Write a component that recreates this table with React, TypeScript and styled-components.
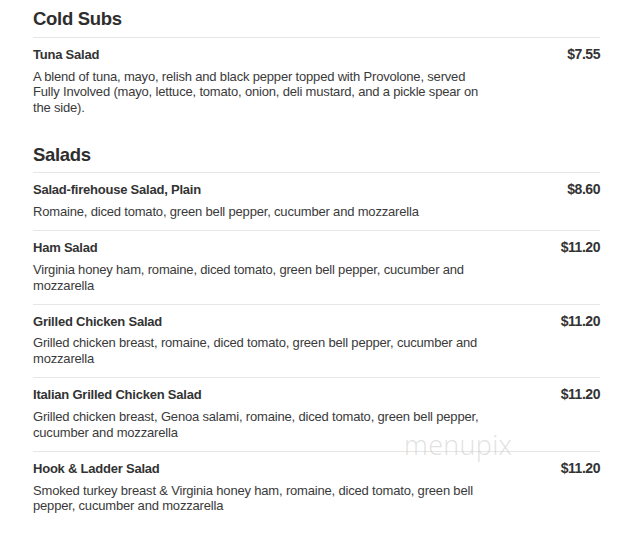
import React from 'react';
import styled, { createGlobalStyle } from 'styled-components';

const Global = createGlobalStyle`
  html, body { margin: 0; padding: 0; background: #ffffff; }
  body {
    font-family: "Liberation Sans", Arial, Helvetica, sans-serif;
    color: #333333;
  }
`;

const Page = styled.main`
  position: relative;
  width: 567px;
  padding: 8.4px 0 0 33px;
`;

const Section = styled.section`
  & + & { margin-top: 17.3px; }
`;

const Heading = styled.h2`
  margin: 0 0 7.6px;
  font-size: 18.5px;
  line-height: 21px;
  font-weight: 700;
  letter-spacing: -0.3px;
  color: #2e2e2e;
`;

const Item = styled.div`
  display: grid;
  grid-template-columns: 1fr auto;
  align-items: baseline;
  border-top: 1px solid #e6e6e6;
  padding: 9px 0 10.5px;
`;

const Name = styled.div`
  font-size: 13px;
  line-height: 15.7px;
  font-weight: 700;
  letter-spacing: -0.22px;
  color: #333333;
`;

const Price = styled.div`
  font-size: 14px;
  line-height: 15.7px;
  font-weight: 700;
  letter-spacing: -0.45px;
  text-align: right;
  color: #333333;
`;

const Desc = styled.p`
  grid-column: 1 / span 2;
  margin: 6px 0 0;
  max-width: 457px;
  font-size: 13px;
  line-height: 15.7px;
  letter-spacing: -0.18px;
  color: #3a3a3a;
`;

const Watermark = styled.span`
  position: absolute;
  left: 404px;
  top: 431px;
  font-family: "Open Sans", "Liberation Sans", sans-serif;
  font-weight: 300;
  font-size: 27px;
  line-height: 27px;
  letter-spacing: 0.3px;
  color: rgba(200, 200, 200, 0.55);
  pointer-events: none;
`;

type MenuItem = { name: string; price: string; desc: string };

const sections: { title: string; items: MenuItem[] }[] = [
  {
    title: 'Cold Subs',
    items: [
      {
        name: 'Tuna Salad',
        price: '$7.55',
        desc:
          'A blend of tuna, mayo, relish and black pepper topped with Provolone, served Fully Involved (mayo, lettuce, tomato, onion, deli mustard, and a pickle spear on the side).',
      },
    ],
  },
  {
    title: 'Salads',
    items: [
      {
        name: 'Salad-firehouse Salad, Plain',
        price: '$8.60',
        desc: 'Romaine, diced tomato, green bell pepper, cucumber and mozzarella',
      },
      {
        name: 'Ham Salad',
        price: '$11.20',
        desc: 'Virginia honey ham, romaine, diced tomato, green bell pepper, cucumber and mozzarella',
      },
      {
        name: 'Grilled Chicken Salad',
        price: '$11.20',
        desc: 'Grilled chicken breast, romaine, diced tomato, green bell pepper, cucumber and mozzarella',
      },
      {
        name: 'Italian Grilled Chicken Salad',
        price: '$11.20',
        desc: 'Grilled chicken breast, Genoa salami, romaine, diced tomato, green bell pepper, cucumber and mozzarella',
      },
      {
        name: 'Hook & Ladder Salad',
        price: '$11.20',
        desc: 'Smoked turkey breast & Virginia honey ham, romaine, diced tomato, green bell pepper, cucumber and mozzarella',
      },
    ],
  },
];

export default function App() {
  return (
    <>
      <Global />
      <Page>
        {sections.map((s) => (
          <Section key={s.title}>
            <Heading>{s.title}</Heading>
            {s.items.map((it) => (
              <Item key={it.name}>
                <Name>{it.name}</Name>
                <Price>{it.price}</Price>
                <Desc>{it.desc}</Desc>
              </Item>
            ))}
          </Section>
        ))}
        <Watermark>menupix</Watermark>
      </Page>
    </>
  );
}
